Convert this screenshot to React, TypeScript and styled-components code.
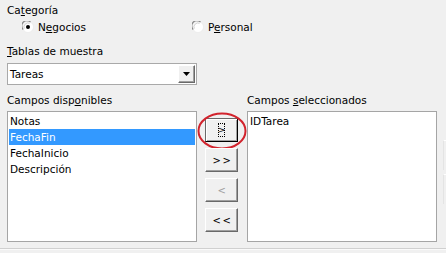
import React from "react";
import styled, { createGlobalStyle } from "styled-components";

const Global = createGlobalStyle`
  html, body { margin: 0; padding: 0; background: #f0f0f0; }
  body { width: 446px; height: 253px; overflow: hidden; }
  * { box-sizing: border-box; }
`;

const Page = styled.div`
  position: relative;
  width: 446px;
  height: 253px;
  overflow: hidden;
  background: #f0f0f0;
  font-family: "DejaVu Sans", Tahoma, sans-serif;
  font-size: 10.5px;
  color: #000;
  padding: 3px 0 0 7px;
`;

const Label = styled.div<{ $mt?: number }>`
  height: 14px;
  line-height: 14px;
  margin-top: ${(p) => p.$mt ?? 0}px;
  white-space: nowrap;
`;

const U = styled.span`
  text-decoration: underline;
  text-underline-offset: 1px;
`;

const RadioRow = styled.div`
  display: flex;
  height: 14px;
  margin-top: 3px;
  padding-left: 15px;
`;

const RadioOption = styled.label<{ $w: number }>`
  display: flex;
  align-items: center;
  gap: 4px;
  width: ${(p) => p.$w}px;
  line-height: 14px;
  white-space: nowrap;
`;

const Select = styled.div`
  margin-top: 5px;
  width: 190px;
  height: 22px;
  background: #fff;
  border: 1px solid #a9a9a9;
  display: flex;
  align-items: center;
  justify-content: space-between;
  padding: 0 1px 0 2px;
`;

const SelectArrow = styled.div`
  width: 17px;
  height: 18px;
  background: #f0f0f0;
  border-top: 1px solid #fff;
  border-left: 1px solid #fff;
  border-right: 1px solid #696969;
  border-bottom: 1px solid #696969;
  box-shadow: inset -1px -1px 0 #a0a0a0;
  display: flex;
  align-items: center;
  justify-content: center;
`;

const Fields = styled.div`
  display: grid;
  grid-template-columns: 190px 50px 190px;
  grid-template-rows: 14px 131px;
  row-gap: 4px;
  margin-top: 8px;
`;

const ListBox = styled.div`
  background: #fff;
  border: 1px solid #a5a5a5;
  padding: 1px;
`;

const Item = styled.div<{ $sel?: boolean }>`
  height: 16px;
  line-height: 16px;
  padding-left: 1px;
  background: ${(p) => (p.$sel ? "#3399ff" : "transparent")};
  color: ${(p) => (p.$sel ? "#fff" : "#000")};
  white-space: nowrap;
`;

const ButtonCol = styled.div`
  display: flex;
  flex-direction: column;
  gap: 6px;
  padding: 7px 0 0 8px;
`;

const Btn = styled.div<{ $default?: boolean; $disabled?: boolean }>`
  position: relative;
  width: 33px;
  height: 24px;
  background: #f0f0f0;
  border-top: 1px solid ${(p) => (p.$default ? "#696969" : "#fff")};
  border-left: 1px solid ${(p) => (p.$default ? "#696969" : "#fff")};
  border-right: 1px solid ${(p) => (p.$default ? "#000" : "#696969")};
  border-bottom: 1px solid ${(p) => (p.$default ? "#000" : "#696969")};
  box-shadow: ${(p) =>
    p.$default
      ? "inset 1px 1px 0 #fff, inset -1px -1px 0 #a0a0a0"
      : "inset -1px -1px 0 #a0a0a0"};
  display: flex;
  align-items: center;
  justify-content: center;
  color: ${(p) => (p.$disabled ? "#a0a0a0" : "#000")};
  font-size: 10px;
  letter-spacing: 1.5px;
  padding-left: 2px;
`;

const Focus = styled.span`
  border: 1px dotted #000;
  line-height: 12px;
  height: 14px;
  width: 7px;
  margin-left: -2px;
  display: flex;
  align-items: center;
  justify-content: center;
  letter-spacing: 0;
  font-size: 9px;
`;

const Ring = styled.svg`
  position: absolute;
  left: -9px;
  top: -7px;
  pointer-events: none;
  overflow: visible;
`;

const Separator = styled.div`
  position: absolute;
  left: 0;
  right: 0;
  top: 248px;
  height: 2px;
  border-top: 1px solid #d0d0d0;
  border-bottom: 1px solid #fafafa;
`;

const CutButtons = styled.div`
  position: absolute;
  left: 443px;
  top: 140px;
  display: flex;
  flex-direction: column;
  gap: 4px;
`;

const CutBtn = styled.div`
  width: 20px;
  height: 30px;
  border-top: 1px solid #fff;
  border-left: 1px solid #e4e4e4;
`;

function Radio({ checked }: { checked?: boolean }) {
  return (
    <svg width="12" height="12" viewBox="0 0 12 12">
      <circle cx="6" cy="6" r="5.5" fill="#fff" stroke="#e6e6e6" strokeWidth="0.6" />
      <path d="M1.2 8.5 A5 5 0 0 1 8.5 1.2" fill="none" stroke="#8a8a8a" strokeWidth="1.2" />
      <path d="M2.3 7.6 A4 4 0 0 1 7.6 2.3" fill="none" stroke="#c8c8c8" strokeWidth="0.9" />
      {checked && <circle cx="6" cy="6" r="2" fill="#000" />}
    </svg>
  );
}

export default function App() {
  return (
    <>
      <Global />
      <Page>
        <Label>
          Ca<U>t</U>egoría
        </Label>
        <RadioRow>
          <RadioOption $w={170}>
            <Radio checked />
            <span>
              N<U>e</U>gocios
            </span>
          </RadioOption>
          <RadioOption $w={80}>
            <Radio />
            <span>
              P<U>e</U>rsonal
            </span>
          </RadioOption>
        </RadioRow>
        <Label $mt={10}>
          <U>T</U>ablas de muestra
        </Label>
        <Select>
          <span>Tareas</span>
          <SelectArrow>
            <svg width="7" height="4" viewBox="0 0 7 4">
              <path d="M0 0 H7 L3.5 4 Z" fill="#000" />
            </svg>
          </SelectArrow>
        </Select>
        <Fields>
          <Label>
            Campos disp<U>o</U>nibles
          </Label>
          <div />
          <Label>
            Campos <U>s</U>eleccionados
          </Label>
          <ListBox>
            <Item>Notas</Item>
            <Item $sel>FechaFin</Item>
            <Item>FechaInicio</Item>
            <Item>Descripción</Item>
          </ListBox>
          <ButtonCol>
            <Btn $default>
              <Focus>&gt;</Focus>
              <Ring width="50" height="38" viewBox="0 0 50 38">
                <ellipse cx="25" cy="19" rx="23.5" ry="17.5" fill="none" stroke="#d2232d" strokeWidth="2" />
              </Ring>
            </Btn>
            <Btn>&gt;&gt;</Btn>
            <Btn $disabled>&lt;</Btn>
            <Btn>&lt;&lt;</Btn>
          </ButtonCol>
          <ListBox>
            <Item>IDTarea</Item>
          </ListBox>
        </Fields>
        <CutButtons>
          <CutBtn />
          <CutBtn />
        </CutButtons>
        <Separator />
      </Page>
    </>
  );
}
